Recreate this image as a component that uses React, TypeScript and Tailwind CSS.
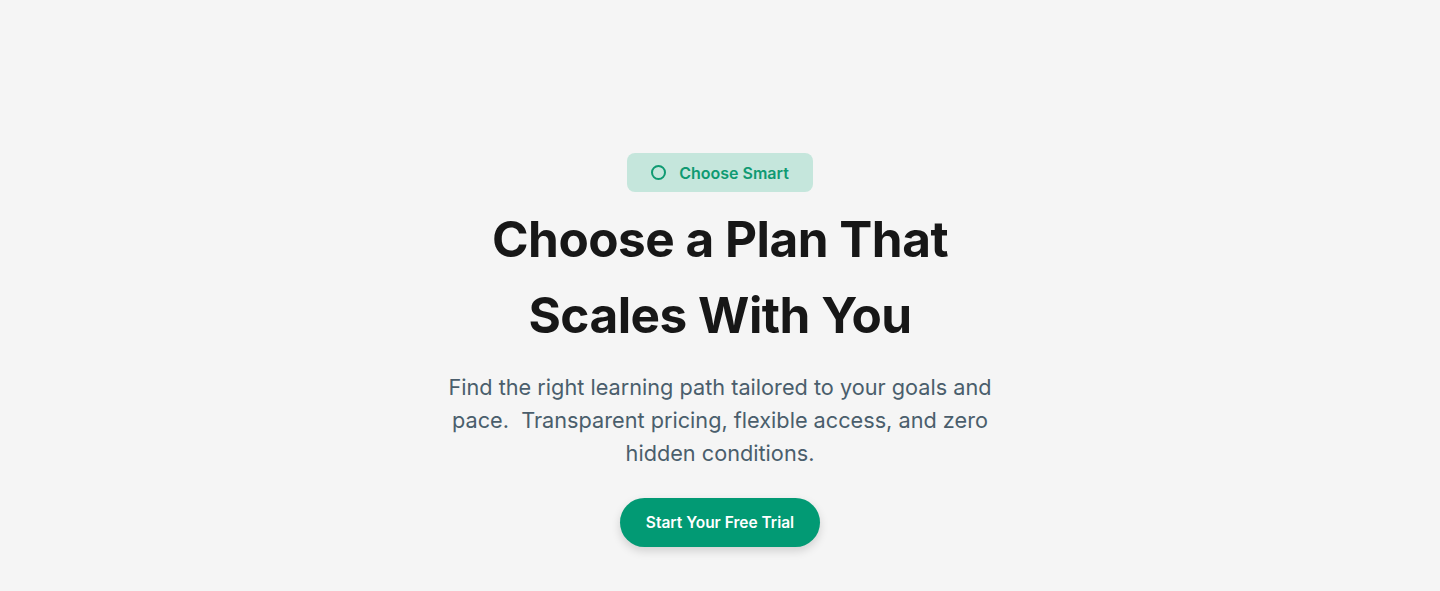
export default function App() {
  return (
    <div
      className="min-h-[591px] w-full bg-[#f5f5f5] flex flex-col items-center pt-[153px]"
      style={{ fontFamily: "Inter, 'Noto Sans', sans-serif" }}
    >
      <div className="flex items-center gap-[13px] h-[39px] px-6 rounded-lg bg-[#c5e6dc] text-[#0f9a72] text-[16px] font-semibold">
        <span className="w-[15px] h-[15px] rounded-full border-2 border-[#0f9a72]" />
        Choose Smart
      </div>

      <h1 className="mt-[9px] text-center text-[49.5px] leading-[76px] font-bold text-[#171717] tracking-[-0.01em]">
        Choose a Plan That
        <br />
        Scales With You
      </h1>

      <p className="mt-[18px] max-w-[580px] text-center text-[21.7px] leading-[33px] text-[#4a5e6c]">
        Find the right learning path tailored to your goals and pace.&nbsp; Transparent pricing, flexible access, and zero hidden conditions.
      </p>

      <button className="mt-[28px] h-[49px] px-[26px] rounded-full bg-[#029a74] text-white text-[15.5px] font-semibold shadow-[0_4px_10px_rgba(0,0,0,0.15)]">
        Start Your Free Trial
      </button>
    </div>
  );
}
